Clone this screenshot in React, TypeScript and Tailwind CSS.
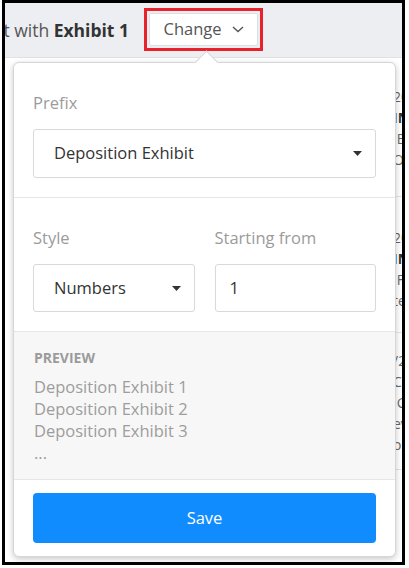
import React from "react";

const font = { fontFamily: '"Open Sans", "Liberation Sans", sans-serif' };

function Caret() {
  return (
    <svg width="9" height="5" viewBox="0 0 9 5" className="shrink-0">
      <path d="M0 0 H9 L4.5 5 Z" fill="#333" />
    </svg>
  );
}

function BehindRows() {
  return (
    <div className="whitespace-nowrap text-[14px] text-[#666] pl-[388px]">
      <div className="h-[139px] border-b border-[#e4e4e4] pt-[28px] leading-[21px]">
        <div>2019-04-12</div>
        <div className="font-bold text-[#333]">INSURANCE POLICY</div>
        <div>&nbsp;By Mark Stone</div>
        <div>ONVERSATION</div>
      </div>
      <div className="h-[136px] border-b border-[#e4e4e4] pt-[30px] leading-[21px]">
        <div>2019-05-02</div>
        <div className="font-bold text-[#333]">INSPECTION REPORT</div>
        <div>&nbsp;Fed Express</div>
        <div>tem 4</div>
      </div>
      <div className="h-[137px] border-b border-[#e4e4e4] pt-[17px] leading-[21px]">
        <div>/2019</div>
        <div>Carter</div>
        <div>&nbsp;Grant</div>
        <div>eview</div>
        <div>or file</div>
      </div>
    </div>
  );
}

export default function App() {
  return (
    <div className="w-[409px] h-[568px] bg-white" style={font}>
      <div className="relative ml-[2px] w-[403px] h-[565px] border-[3px] border-black overflow-hidden bg-white">
        {/* header bar */}
        <div className="h-[55px] bg-[#edeef1] border-b border-[#dfe1e4] flex items-center">
          <div className="w-[124px] flex justify-end overflow-hidden whitespace-nowrap text-[17.5px] text-[#555]">
            <span>
              Start with <span className="font-bold text-[#333]">Exhibit 1</span>
            </span>
          </div>
          <div className="ml-[15px] -mt-[2px] border-[3px] border-[#e8212b] p-[2px]">
            <button className="w-[109px] h-[33px] bg-white border border-[#dcdee1] rounded-[2px] flex items-center justify-center gap-[10px] text-[16.5px] text-[#555]">
              Change
              <svg width="12" height="7" viewBox="0 0 12 7">
                <path d="M1 1 L6 5.5 L11 1" fill="none" stroke="#555" strokeWidth="1.4" />
              </svg>
            </button>
          </div>
        </div>

        <BehindRows />

        {/* popover */}
        <div className="absolute left-[8px] top-[59px] w-[383px] bg-white border border-[#d6d6d6] rounded-[6px] shadow-[0_2px_6px_rgba(0,0,0,0.22)]">
          <div className="absolute left-[184px] -top-[9px] w-[17px] h-[17px] rotate-45 bg-white border-l border-t border-[#d6d6d6]" />
          <div className="relative px-[19px] pt-[30px] pb-[19px]">
            <div className="text-[16.5px] leading-[20px] text-[#9b9b9b]">Prefix</div>
            <div className="mt-[16px] h-[49px] border border-[#d9d9d9] rounded-[3px] pl-[20px] pr-[13px] flex items-center justify-between text-[16.5px] text-[#333]">
              <span>Deposition Exhibit</span>
              <Caret />
            </div>
          </div>
          <div className="border-t border-[#e6e6e6] px-[19px] pt-[30px] pb-[19px] grid grid-cols-2 gap-x-[20px]">
            <div>
              <div className="text-[16.5px] leading-[20px] text-[#9b9b9b]">Style</div>
              <div className="mt-[16px] h-[48px] border border-[#d9d9d9] rounded-[3px] pl-[20px] pr-[13px] flex items-center justify-between text-[16.5px] text-[#333]">
                <span>Numbers</span>
                <Caret />
              </div>
            </div>
            <div>
              <div className="text-[16.5px] leading-[20px] text-[#9b9b9b]">Starting from</div>
              <div className="mt-[16px] h-[48px] border border-[#d9d9d9] rounded-[3px] pl-[14px] flex items-center text-[16.5px] text-[#333]">
                1
              </div>
            </div>
          </div>
          <div className="border-t border-[#e6e6e6] bg-[#f7f7f7] px-[20px] pt-[18px] pb-[15px]">
            <div className="text-[14px] leading-[16px] font-bold text-[#9b9b9b]">PREVIEW</div>
            <div className="mt-[10px] text-[16.5px] leading-[22px] text-[#9d9d9d]">
              <div>Deposition Exhibit 1</div>
              <div>Deposition Exhibit 2</div>
              <div>Deposition Exhibit 3</div>
              <div>...</div>
            </div>
          </div>
          <div className="border-t border-[#e6e6e6] px-[19px] py-[13px]">
            <button className="w-full h-[50px] bg-[#118cff] rounded-[4px] text-white text-[16.5px]">Save</button>
          </div>
        </div>
      </div>
    </div>
  );
}
